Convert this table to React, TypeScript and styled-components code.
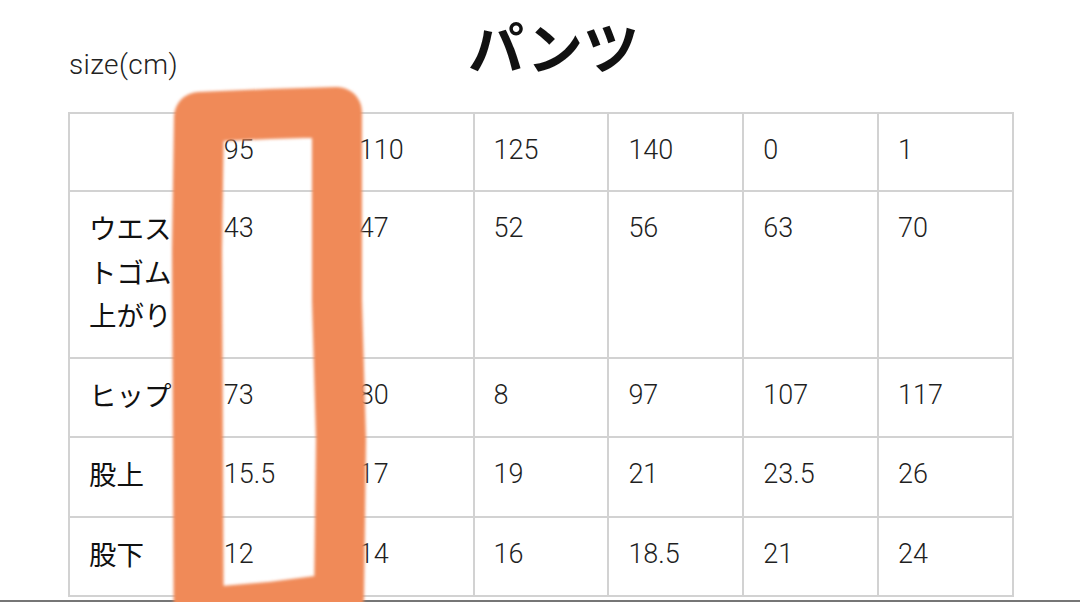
import React from "react";
import styled, { createGlobalStyle } from "styled-components";

const GlobalStyle = createGlobalStyle`
  html, body { margin: 0; padding: 0; background: #ffffff; }
  body { font-family: "Roboto", "Noto Sans CJK JP", sans-serif; }
`;

const Page = styled.div`
  position: relative;
  width: 1080px;
  height: 602px;
  display: flex;
  flex-direction: column;
  overflow: hidden;
  background: #ffffff;
`;

const Header = styled.header`
  display: grid;
  grid-template-columns: 1fr auto 1fr;
  align-items: start;
  height: 112px;
  padding: 0 66px 0 69px;
  box-sizing: border-box;
`;

const SizeLabel = styled.div`
  margin-top: 50px;
  font-family: "Roboto", sans-serif;
  font-weight: 300;
  font-size: 28px;
  line-height: 30px;
  letter-spacing: 0.4px;
  color: #222222;
`;

const Title = styled.h1`
  margin: 13px 0 0 24px;
  font-family: "Noto Sans CJK JP", sans-serif;
  font-weight: 700;
  font-size: 56px;
  line-height: 64px;
  color: #111111;
`;

const Table = styled.table`
  margin-left: 68px;
  width: 946px;
  table-layout: fixed;
  border-collapse: collapse;
`;

const Cell = styled.td<{ $label?: boolean }>`
  border: 2px solid #d2d2d2;
  padding: ${(p) => (p.$label ? "14px 19px 20px 19px" : "14px 19px 18px 19px")};
  vertical-align: top;
  text-align: left;
  font-family: ${(p) =>
    p.$label ? `"Noto Sans CJK JP", sans-serif` : `"Roboto", "Noto Sans CJK JP", sans-serif`};
  font-weight: ${(p) => (p.$label ? 400 : 300)};
  font-size: ${(p) => (p.$label ? "27.5px" : "27px")};
  line-height: ${(p) => (p.$label ? "43.5px" : "44px")};
  color: ${(p) => (p.$label ? "#111111" : "#1f1f1f")};
`;

const BottomBar = styled.div`
  margin-top: auto;
  height: 2px;
  background: #767676;
`;

const Marker = styled.svg`
  position: absolute;
  left: 0;
  top: 0;
  pointer-events: none;
`;

const sizes = ["95", "110", "125", "140", "0", "1"];
const rows: { label: string; values: string[] }[] = [
  { label: "ウエストゴム上がり", values: ["43", "47", "52", "56", "63", "70"] },
  { label: "ヒップ", values: ["73", "80", "8", "97", "107", "117"] },
  { label: "股上", values: ["15.5", "17", "19", "21", "23.5", "26"] },
  { label: "股下", values: ["12", "14", "16", "18.5", "21", "24"] },
];

export default function App() {
  return (
    <>
      <GlobalStyle />
      <Page>
        <Header>
          <SizeLabel>size(cm)</SizeLabel>
          <Title>パンツ</Title>
          <div />
        </Header>
        <Table>
          <tbody>
            <tr>
              <Cell />
              {sizes.map((s, i) => (
                <Cell key={i}>{s}</Cell>
              ))}
            </tr>
            {rows.map((r) => (
              <tr key={r.label}>
                <Cell $label>{r.label}</Cell>
                {r.values.map((v, i) => (
                  <Cell key={i}>{v}</Cell>
                ))}
              </tr>
            ))}
          </tbody>
        </Table>
        <BottomBar />
        <Marker width="1080" height="602" viewBox="0 0 1080 602">
          <defs>
            <filter
              id="soft"
              filterUnits="userSpaceOnUse"
              x="0"
              y="0"
              width="1080"
              height="602"
            >
              <feGaussianBlur stdDeviation="1.8" />
            </filter>
          </defs>
          <path
            d="M 199 690 L 198 450 L 197 250 L 199 117 L 270 114 L 337 112 L 337 300 L 341 440 L 340 520 L 339 598 L 270 607 L 201 613 L 199 690"
            fill="none"
            stroke="#f08a58"
            strokeWidth="50"
            strokeLinejoin="round"
            strokeLinecap="round"
            filter="url(#soft)"
          />
        </Marker>
      </Page>
    </>
  );
}
